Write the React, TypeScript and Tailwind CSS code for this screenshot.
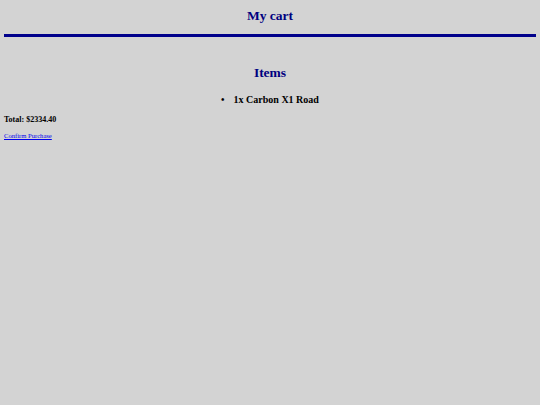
export default function App() {
  return (
    <div className="min-h-[405px] bg-[#d3d3d3] px-1 pt-[7px] font-['Liberation_Serif',serif] text-black">
      <h1 className="text-center text-[13.5px] font-bold leading-[18px] text-[#000080]">My cart</h1>
      <div className="mt-[9px] h-[3px] bg-[#00008b]" />
      <h2 className="mt-[27px] text-center text-[13.5px] font-bold leading-[18px] text-[#000080]">Items</h2>
      <ul className="mt-[11px] flex flex-col items-center">
        <li className="flex items-center gap-[9px] text-[10px] font-bold leading-[14px]">
          <span className="text-[10px]">•</span>
          <span>1x Carbon X1 Road</span>
        </li>
      </ul>
      <p className="mt-[8px] text-[8px] font-bold leading-[10px]">Total: $2334.40</p>
      <a href="#" className="mt-[6px] block w-fit text-[6.6px] leading-[9px] text-[#0000ee] underline">
        Confirm Purchase
      </a>
    </div>
  );
}
